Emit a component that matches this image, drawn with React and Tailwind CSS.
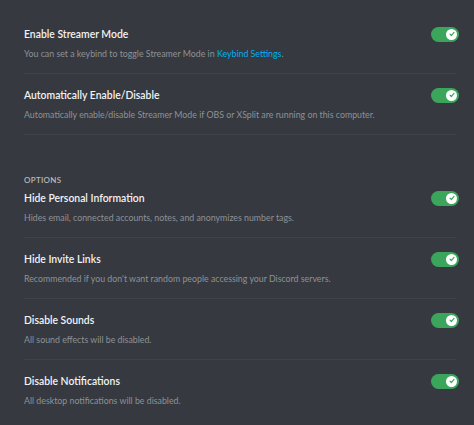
import { useState } from 'react'

const ROWS = [
  {
    title: 'Automatically Enable/Disable',
    desc: 'Automatically enable/disable Streamer Mode if OBS or XSplit are running on this computer.',
  },
]

const OPTIONS = [
  { title: 'Hide Personal Information', desc: 'Hides email, connected accounts, notes, and anonymizes number tags.' },
  { title: 'Hide Invite Links', desc: "Recommended if you don't want random people accessing your Discord servers." },
  { title: 'Disable Sounds', desc: 'All sound effects will be disabled.' },
  { title: 'Disable Notifications', desc: 'All desktop notifications will be disabled.' },
]

function Toggle({ on, onClick }) {
  return (
    <button
      onClick={onClick}
      className={`relative w-[28px] h-[15px] rounded-full flex-shrink-0 ${on ? 'bg-[#3ba55c]' : 'bg-[#72767d]'}`}
    >
      <span
        className={`absolute top-[2px] w-[11px] h-[11px] rounded-full bg-white flex items-center justify-center ${on ? 'right-[2px]' : 'left-[2px]'}`}
      >
        {on && (
          <svg className="w-[8px] h-[8px]" viewBox="0 0 12 12" fill="none">
            <path d="M3 6.3l2 2 4-4.6" stroke="#3ba55c" strokeWidth={1.8} strokeLinecap="round" strokeLinejoin="round" />
          </svg>
        )}
      </span>
    </button>
  )
}

function SettingRow({ title, children, divider = true }) {
  const [on, setOn] = useState(true)
  return (
    <div>
      <div className="flex items-center justify-between h-[16px]">
        <span className="text-[10.4px] font-semibold text-[#f2f3f5] leading-[16px]">{title}</span>
        <Toggle on={on} onClick={() => setOn(!on)} />
      </div>
      <div className="mt-[5px] text-[8.8px] leading-[14px] text-[#8e9297]">{children}</div>
      {divider && <div className="mt-[12px] mr-[3px] h-px bg-[#40434a]" />}
    </div>
  )
}

export default function App() {
  return (
    <div className="w-[474px] h-[425px] bg-[#36393f] overflow-hidden font-['Lato',sans-serif]">
      <div className="pl-[24px] pr-[15px] pt-[26px] flex flex-col">
        <SettingRow title="Enable Streamer Mode">
          You can set a keybind to toggle Streamer Mode in{' '}
          <span className="text-[#00b0f4]">Keybind Settings</span>.
        </SettingRow>
        {ROWS.map((r) => (
          <div key={r.title} className="pt-[13px]">
            <SettingRow title={r.title}>{r.desc}</SettingRow>
          </div>
        ))}

        <div className="mt-[39px] text-[8px] font-semibold tracking-[0.3px] leading-[12px] text-[#b9bbbe]">OPTIONS</div>
        {OPTIONS.map((o, i) => (
          <div key={o.title} className={i === 0 ? 'pt-[4px]' : 'pt-[13px]'}>
            <SettingRow title={o.title} divider={i < OPTIONS.length - 1}>{o.desc}</SettingRow>
          </div>
        ))}
      </div>
    </div>
  )
}
